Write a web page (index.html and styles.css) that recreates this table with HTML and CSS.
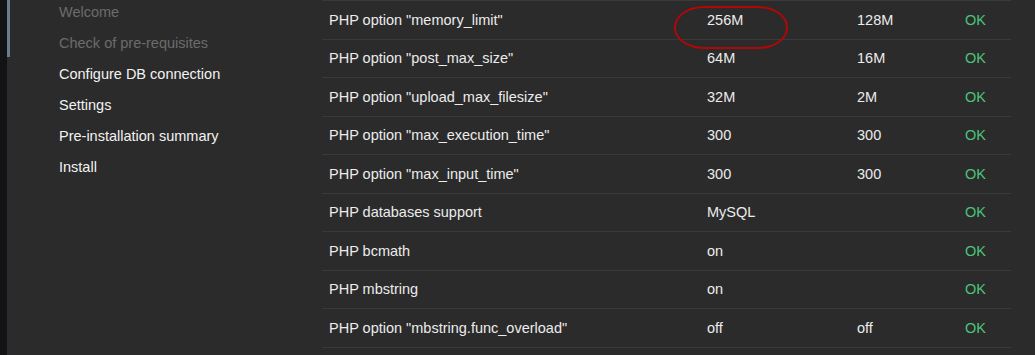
FILE: index.html
```html
<!DOCTYPE html>
<html lang="en">
<head>
<meta charset="utf-8">
<title>Installation - Check of pre-requisites</title>
<link rel="stylesheet" href="styles.css">
</head>
<body>
<div class="rail"></div>
<div class="track"><div class="thumb"></div></div>
<nav class="steps">
  <ul>
    <li class="done">Welcome</li>
    <li class="done">Check of pre-requisites</li>
    <li>Configure DB connection</li>
    <li>Settings</li>
    <li>Pre-installation summary</li>
    <li>Install</li>
  </ul>
</nav>
<main class="content">
  <div class="checks">
    <div class="row">
      <div class="cell">PHP option "memory_limit"</div>
      <div class="cell current">256M<span class="mark"></span></div>
      <div class="cell">128M</div>
      <div class="cell ok">OK</div>
    </div>
    <div class="row">
      <div class="cell">PHP option "post_max_size"</div>
      <div class="cell">64M</div>
      <div class="cell">16M</div>
      <div class="cell ok">OK</div>
    </div>
    <div class="row">
      <div class="cell">PHP option "upload_max_filesize"</div>
      <div class="cell">32M</div>
      <div class="cell">2M</div>
      <div class="cell ok">OK</div>
    </div>
    <div class="row">
      <div class="cell">PHP option "max_execution_time"</div>
      <div class="cell">300</div>
      <div class="cell">300</div>
      <div class="cell ok">OK</div>
    </div>
    <div class="row">
      <div class="cell">PHP option "max_input_time"</div>
      <div class="cell">300</div>
      <div class="cell">300</div>
      <div class="cell ok">OK</div>
    </div>
    <div class="row">
      <div class="cell">PHP databases support</div>
      <div class="cell">MySQL</div>
      <div class="cell"></div>
      <div class="cell ok">OK</div>
    </div>
    <div class="row">
      <div class="cell">PHP bcmath</div>
      <div class="cell">on</div>
      <div class="cell"></div>
      <div class="cell ok">OK</div>
    </div>
    <div class="row">
      <div class="cell">PHP mbstring</div>
      <div class="cell">on</div>
      <div class="cell"></div>
      <div class="cell ok">OK</div>
    </div>
    <div class="row">
      <div class="cell">PHP option "mbstring.func_overload"</div>
      <div class="cell">off</div>
      <div class="cell">off</div>
      <div class="cell ok">OK</div>
    </div>
  </div>
</main>
</body>
</html>
```

FILE: styles.css
```css
* {
  box-sizing: border-box;
}

html, body {
  margin: 0;
  padding: 0;
}

body {
  display: flex;
  align-items: flex-start;
  height: 355px;
  overflow: hidden;
  background: #2b2b2b;
  color: #ececec;
  font-family: "Liberation Sans", Arial, sans-serif;
  font-size: 14.5px;
}

.rail {
  flex: 0 0 7px;
  align-self: stretch;
  background: #111315;
}

.track {
  flex: 0 0 3px;
}

.thumb {
  height: 57px;
  background: #6a7d8a;
}

.steps {
  flex: 0 0 312px;
  padding-left: 49px;
  margin-top: -3px;
}

.steps ul {
  list-style: none;
  margin: 0;
  padding: 0;
}

.steps li {
  height: 31px;
  line-height: 31px;
  white-space: nowrap;
  color: #f2f2f2;
}

.steps li.done {
  color: #6c6c6c;
}

.content {
  flex: 0 0 689px;
}

.checks {
  border-top: 1px solid #3a3a3a;
}

.row {
  display: grid;
  grid-template-columns: 378px 150px 108px 53px;
  height: 38.5px;
  border-bottom: 1px solid #3a3a3a;
}

.cell {
  display: flex;
  align-items: center;
  padding-left: 7px;
  white-space: nowrap;
}

.cell.current {
  position: relative;
}

.mark {
  position: absolute;
  left: -26px;
  top: 5px;
  width: 114px;
  height: 43px;
  border: 2px solid #b00808;
  border-radius: 30px / 21px;
}

.ok {
  color: #4cc37a;
}
```
